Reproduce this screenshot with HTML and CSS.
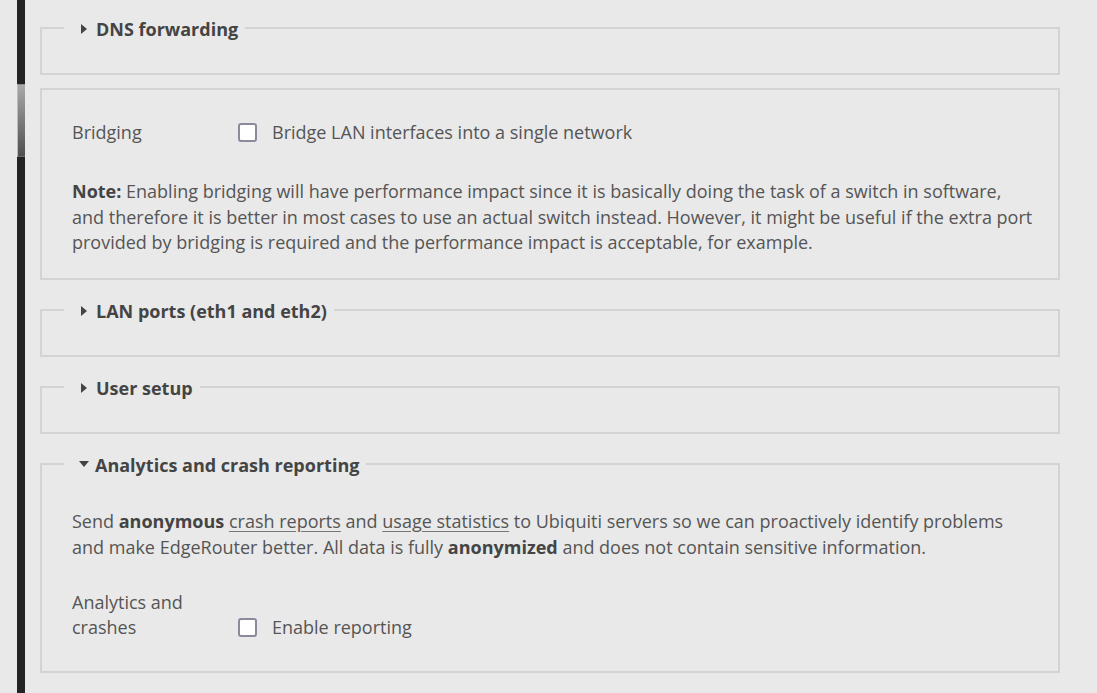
FILE: index.html
```html
<!DOCTYPE html>
<html>
<head>
<meta charset="utf-8">
<link rel="stylesheet" href="styles.css">
</head>
<body>
<div class="page">
  <div class="gutter"></div>
  <div class="scroll">
    <div class="scroll-top"></div>
    <div class="scroll-thumb"></div>
    <div class="scroll-rest"></div>
  </div>
  <main class="content">
    <fieldset class="section collapsed first">
      <legend><svg class="tri" width="7" height="10" viewBox="0 0 7 10"><polygon points="0,0 6,5 0,10"/></svg>DNS forwarding</legend>
    </fieldset>

    <fieldset class="section plain">
      <div class="row first-row">
        <div class="label">Bridging</div>
        <label class="control"><span class="checkbox"></span>Bridge LAN interfaces into a single network</label>
      </div>
      <p class="note"><b>Note:</b> Enabling bridging will have performance impact since it is basically doing the task of a switch in software, and therefore it is better in most cases to use an actual switch instead. However, it might be useful if the extra port provided by bridging is required and the performance impact is acceptable, for example.</p>
    </fieldset>

    <fieldset class="section collapsed">
      <legend><svg class="tri" width="7" height="10" viewBox="0 0 7 10"><polygon points="0,0 6,5 0,10"/></svg>LAN ports (eth1 and eth2)</legend>
    </fieldset>

    <fieldset class="section collapsed">
      <legend><svg class="tri" width="7" height="10" viewBox="0 0 7 10"><polygon points="0,0 6,5 0,10"/></svg>User setup</legend>
    </fieldset>

    <fieldset class="section open">
      <legend><svg class="tri down" width="10" height="7" viewBox="0 0 10 7"><polygon points="0,0 10,0 5,6"/></svg>Analytics and crash reporting</legend>
      <p class="intro">Send <b>anonymous</b> <a href="#">crash reports</a> and <a href="#">usage statistics</a> to Ubiquiti servers so we can proactively identify problems and make EdgeRouter better. All data is fully <b>anonymized</b> and does not contain sensitive information.</p>
      <div class="row bottom-row">
        <div class="label">Analytics and crashes</div>
        <label class="control"><span class="checkbox"></span>Enable reporting</label>
      </div>
    </fieldset>
  </main>
</div>
</body>
</html>
```

FILE: styles.css
```css
html, body {
  margin: 0;
  padding: 0;
  background: #e9e9e9;
  height: 100%;
  overflow: hidden;
}
body {
  font-family: "Open Sans", "Liberation Sans", sans-serif;
  font-size: 18px;
  color: #555;
}
.page {
  display: flex;
  height: 693px;
}
.gutter {
  width: 17px;
  flex: none;
}
.scroll {
  width: 8px;
  flex: none;
  display: flex;
  flex-direction: column;
  background: #232323;
}
.scroll-top {
  height: 84px;
}
.scroll-thumb {
  height: 73px;
  background: linear-gradient(#a9a9a9, #4f4f4f);
  border-left: 1px solid #bdbdbd;
  border-top: 1px solid #8a8a8a;
  border-bottom: 1px solid #6a6a6a;
  box-sizing: border-box;
}
.scroll-rest {
  flex: 1;
}
.content {
  flex: 1;
  padding: 14px 37px 0 15px;
  min-width: 0;
}
.section {
  margin: 0 0 16px;
  padding: 14px 24px 16px 30px;
  border: 2px solid #d3d3d3;
  min-width: 0;
}
.section.collapsed {
  padding-bottom: 17px;
}
.section.first {
  margin-bottom: 13px;
}
.section legend {
  margin-left: -8px;
  padding: 2px 7px 0 17px;
  height: 28px;
  box-sizing: border-box;
  font-weight: 700;
  font-size: 18px;
  line-height: 26px;
  color: #444;
  display: flex;
  align-items: center;
}
.tri {
  fill: #444;
  margin-right: 8px;
  flex: none;
}
.tri.down {
  margin-left: -2px;
  margin-right: 6px;
}
.row {
  display: flex;
  align-items: center;
  line-height: 24px;
}
.label {
  width: 150px;
  flex: none;
  margin-right: 16px;
}
.control {
  display: flex;
  align-items: center;
}
.checkbox {
  width: 19px;
  height: 19px;
  box-sizing: border-box;
  border: 2px solid #8b8a9a;
  border-radius: 3px;
  background: #fff;
  margin-right: 15px;
  flex: none;
}
.plain {
  padding-top: 13px;
}
.first-row {
  margin-top: 17px;
}
.note {
  margin: 35px 0 6px;
  line-height: 25.5px;
}
.note b, .intro b {
  color: #444;
}
.intro {
  margin: 16px 0 0;
  line-height: 26px;
}
.intro a {
  color: #555;
  text-decoration: underline;
  text-underline-offset: 3px;
  text-decoration-color: #777;
}
.bottom-row {
  margin-top: 30px;
  margin-bottom: 15px;
  align-items: flex-end;
  line-height: 25px;
}
.bottom-row .control {
  height: 25px;
}
```
